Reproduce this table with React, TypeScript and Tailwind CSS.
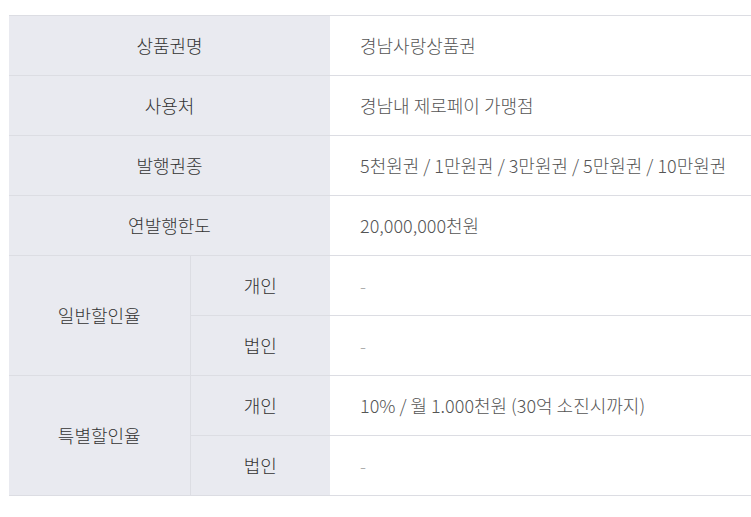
export default function App() {
  const th = "bg-[#e9eaf0] text-[#333] font-light text-center border-t border-[#dcdde3] h-[60px] p-0 pb-[2px]";
  const td = "bg-white text-[#555] font-light text-left border-t border-[#dcdde3] h-[60px] pl-[30px] pb-[2px]";
  const dash = "bg-white text-[#aaa] font-light text-left border-t border-[#dcdde3] h-[60px] pl-[30px] pb-[2px]";
  return (
    <div className="w-[751px] h-[517px] bg-white pt-[15px] pl-[9px]" style={{ fontFamily: '"Noto Sans CJK KR", "Noto Sans", sans-serif' }}>
      <table className="w-[742px] border-collapse border-b border-[#dcdde3] text-[18px] leading-[24px] table-fixed">
        <colgroup>
          <col className="w-[181px]" />
          <col className="w-[140px]" />
          <col />
        </colgroup>
        <tbody>
          <tr>
            <th colSpan={2} className={th}>상품권명</th>
            <td className={td}>경남사랑상품권</td>
          </tr>
          <tr>
            <th colSpan={2} className={th}>사용처</th>
            <td className={td}>경남내 제로페이 가맹점</td>
          </tr>
          <tr>
            <th colSpan={2} className={th}>발행권종</th>
            <td className={td}>5천원권 / 1만원권 / 3만원권 / 5만원권 / 10만원권</td>
          </tr>
          <tr>
            <th colSpan={2} className={th}>연발행한도</th>
            <td className={td}>20,000,000천원</td>
          </tr>
          <tr>
            <th rowSpan={2} className={th + " border-r"}>일반할인율</th>
            <th className={th}>개인</th>
            <td className={dash}>-</td>
          </tr>
          <tr>
            <th className={th}>법인</th>
            <td className={dash}>-</td>
          </tr>
          <tr>
            <th rowSpan={2} className={th + " border-r"}>특별할인율</th>
            <th className={th}>개인</th>
            <td className={td}>10% / 월 1.000천원 (30억 소진시까지)</td>
          </tr>
          <tr>
            <th className={th}>법인</th>
            <td className={dash}>-</td>
          </tr>
        </tbody>
      </table>
    </div>
  );
}
